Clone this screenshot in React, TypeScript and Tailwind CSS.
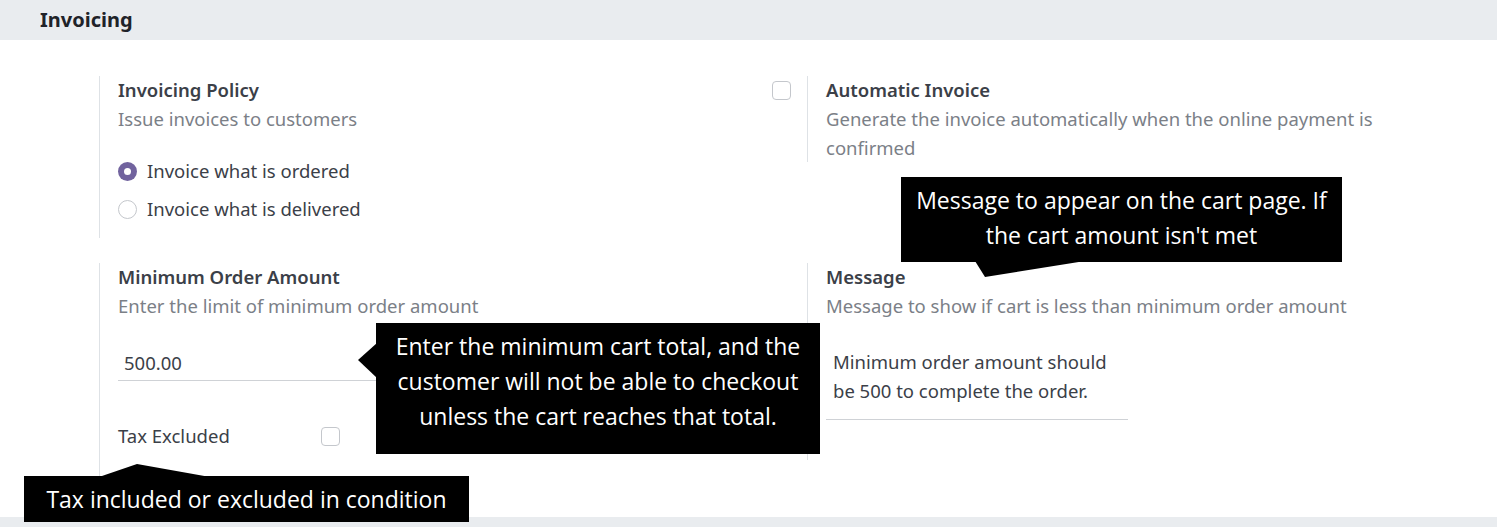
import React from 'react'

const ui = { fontFamily: '"Noto Sans", "Open Sans", sans-serif' }
const tip = { fontFamily: '"Open Sans", Lato, sans-serif' }

function Checkbox() {
  return <span className="block w-[19px] h-[19px] rounded-[4px] border border-[#c4c7cc] bg-white" />
}

function Radio({ checked }: { checked?: boolean }) {
  return checked ? (
    <span className="block w-[19px] h-[19px] rounded-full bg-[#71639e] flex items-center justify-center">
      <span className="block w-[7px] h-[7px] rounded-full bg-white" />
    </span>
  ) : (
    <span className="block w-[19px] h-[19px] rounded-full border border-[#c4c7cc] bg-white" />
  )
}

function Setting({
  box,
  title,
  desc,
  children,
}: {
  box?: boolean
  title: string
  desc: string
  children?: React.ReactNode
}) {
  return (
    <div className="flex">
      <div className="w-[47px] shrink-0 flex justify-end pr-[16px] pt-[5px]">{box && <Checkbox />}</div>
      <div className="border-l border-[#dee2e6] pl-[18px] pr-6 flex-1">
        <div className="text-[18.5px] leading-[28px] font-semibold text-[#3b4048]">{title}</div>
        <div className="text-[18.5px] leading-[29px] text-[#7b8087]">{desc}</div>
        {children}
      </div>
    </div>
  )
}

export default function App() {
  return (
    <div className="relative w-[1497px] h-[527px] overflow-hidden bg-white" style={ui}>
      <div className="h-10 bg-[#e9ecef] px-10 flex items-center">
        <h2 className="text-[20px] font-bold text-[#1f2329]">Invoicing</h2>
      </div>

      <div className="h-[477px]">
        <div className="px-[52px] pt-[36px] grid grid-cols-[708px_708px] gap-y-[25px] items-start">
          <Setting title="Invoicing Policy" desc="Issue invoices to customers">
            <div className="mt-[19px] pb-[10px] text-[18.5px] text-[#3b4048]">
              <label className="flex items-center gap-[10px] h-[38px]">
                <Radio checked />
                Invoice what is ordered
              </label>
              <label className="flex items-center gap-[10px] h-[38px]">
                <Radio />
                Invoice what is delivered
              </label>
            </div>
          </Setting>

          <Setting
            box
            title="Automatic Invoice"
            desc="Generate the invoice automatically when the online payment is confirmed"
          />

          <Setting title="Minimum Order Amount" desc="Enter the limit of minimum order amount">
            <div className="mt-[25px] w-[400px] h-[36px] border-b border-[#cfd2d6] px-[6px] flex items-center text-[18.5px] text-[#3b4048]">
              500.00
            </div>
            <div className="mt-[40px] h-[30px] flex items-center text-[18.5px] text-[#3b4048]">
              <span className="w-[203px]">Tax Excluded</span>
              <Checkbox />
            </div>
            <div className="h-[32px]" />
          </Setting>

          <Setting title="Message" desc="Message to show if cart is less than minimum order amount">
            <div className="mt-[22px] w-[302px] border-b border-[#cfd2d6] px-[7px] pt-[5px] pb-[14px] text-[18.5px] leading-[29px] text-[#3b4048]">
              Minimum order amount should be 500 to complete the order.
            </div>
            <div className="h-[40px]" />
          </Setting>
        </div>
      </div>

      <div className="h-10 bg-[#e9ecef]" />

      {/* callouts */}
      <div
        className="absolute left-[901px] top-[177px] w-[441px] h-[85px] bg-black text-white text-[23px] leading-[35px] text-center pt-[6px]"
        style={tip}
      >
        Message to appear on the cart page. If
        <br />
        the cart amount isn't met
      </div>
      <svg className="absolute left-0 top-0" width="1497" height="527" viewBox="0 0 1497 527" fill="black">
        <polygon points="975,261 985,277 1085,261" />
        <polygon points="377,343 358,360 377,378" />
        <polygon points="99,477 137,464 210,477" />
      </svg>
      <div
        className="absolute left-[376px] top-[323px] w-[444px] h-[131px] bg-black text-white text-[23px] leading-[35px] text-center pt-[6px]"
        style={tip}
      >
        Enter the minimum cart total, and the
        <br />
        customer will not be able to checkout
        <br />
        unless the cart reaches that total.
      </div>
      <div
        className="absolute left-[24px] top-[476px] w-[445px] h-[46px] bg-black text-white text-[23px] flex items-center justify-center"
        style={tip}
      >
        Tax included or excluded in condition
      </div>
    </div>
  )
}
